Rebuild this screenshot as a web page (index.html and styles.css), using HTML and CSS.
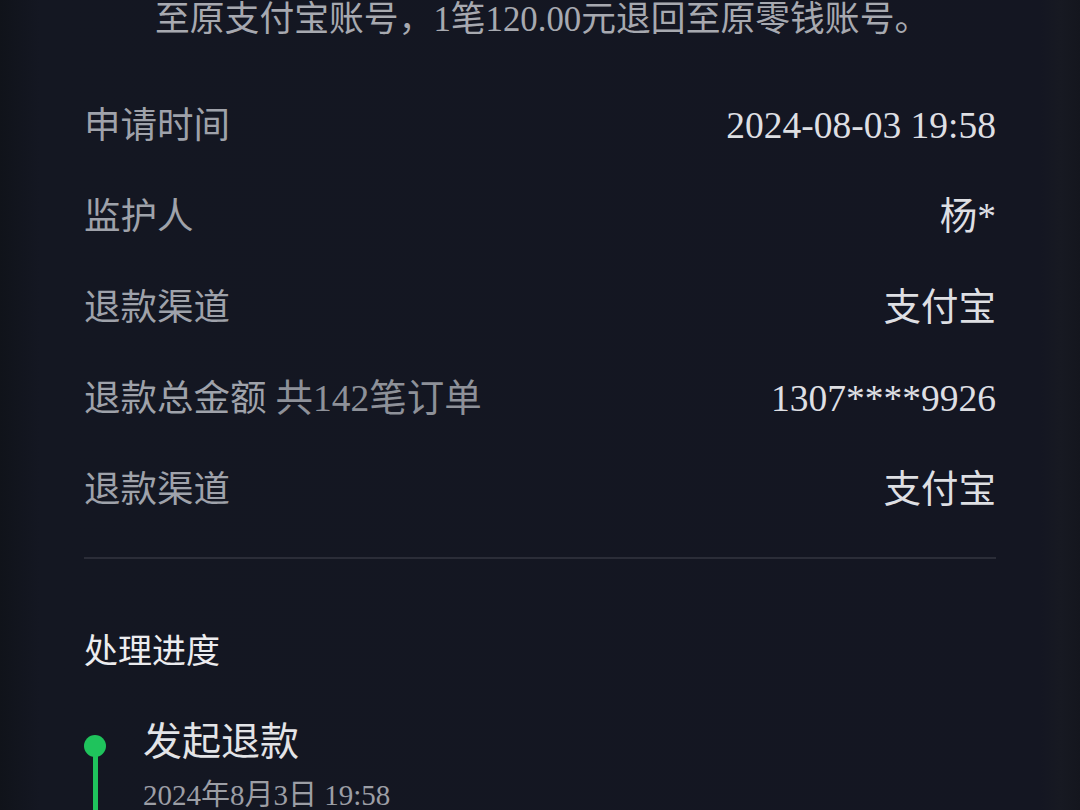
FILE: index.html
```html
<!DOCTYPE html>
<html lang="zh-CN">
<head>
<meta charset="utf-8">
<title>退款详情</title>
<link rel="stylesheet" href="styles.css">
</head>
<body>
<div class="screen">
  <div class="card">
    <p class="notice">至原支付宝账号，1笔120.00元退回至原零钱账号。</p>
    <div class="rows">
      <div class="row"><span class="label">申请时间</span><span class="value">2024-08-03 19:58</span></div>
      <div class="row"><span class="label">监护人</span><span class="value">杨*</span></div>
      <div class="row"><span class="label">退款渠道</span><span class="value">支付宝</span></div>
      <div class="row"><span class="label">退款总金额<span class="sub">共142笔订单</span></span><span class="value">1307****9926</span></div>
      <div class="row"><span class="label">退款渠道</span><span class="value">支付宝</span></div>
    </div>
    <div class="divider"></div>
    <h2 class="section-title">处理进度</h2>
    <div class="timeline">
      <div class="step">
        <div class="rail"><span class="dot"></span><span class="line"></span></div>
        <div class="step-body">
          <div class="step-title">发起退款</div>
          <div class="step-time">2024年8月3日 19:58</div>
        </div>
      </div>
    </div>
  </div>
</div>
</body>
</html>
```

FILE: styles.css
```css
html, body {
  margin: 0;
  padding: 0;
  height: 100%;
  background: #131520;
  overflow: hidden;
}
body {
  font-family: "Liberation Serif", "Noto Sans CJK SC", sans-serif;
}
.screen {
  height: 810px;
  overflow: hidden;
  display: flex;
  background: linear-gradient(90deg, #10131a 0, #141722 40px, #141622 1040px, #171922 1060px, #14161e 1080px);
}
.card {
  flex: 1;
  padding: 0 84px;
  display: flex;
  flex-direction: column;
}
.card > * {
  flex-shrink: 0;
}
.notice {
  margin: 0;
  padding-left: 71px;
  font-size: 34.8px;
  line-height: 40px;
  color: #a7a9b0;
  white-space: nowrap;
}
.rows {
  margin-top: 40px;
  display: flex;
  flex-direction: column;
}
.row {
  flex-shrink: 0;
  height: 91px;
  display: flex;
  align-items: center;
  justify-content: space-between;
  font-size: 36.5px;
  line-height: 44px;
}
.label {
  color: #9fa2aa;
}
.sub {
  margin-left: 9px;
  font-size: 37.5px;
  color: #8e9199;
}
.value {
  font-size: 37.5px;
  color: #dedfe3;
}
.divider {
  margin-top: 22px;
  height: 2px;
  background: #2b2d38;
}
.section-title {
  margin: 68px 0 0;
  font-size: 34px;
  line-height: 50px;
  font-weight: normal;
  color: #ececef;
}
.timeline {
  margin-top: 41px;
}
.step {
  display: flex;
  gap: 37px;
}
.rail {
  width: 22px;
  display: flex;
  flex-direction: column;
  align-items: center;
  padding-top: 17px;
}
.dot {
  width: 22px;
  height: 22px;
  border-radius: 50%;
  background: #1fc35c;
  flex: none;
}
.line {
  width: 5px;
  flex: 1;
  min-height: 80px;
  margin-top: -2px;
  background: #1fc35c;
}
.step-body {
  display: flex;
  flex-direction: column;
}
.step-title {
  font-size: 39px;
  line-height: 48px;
  color: #e3e4e7;
}
.step-time {
  margin-top: 12px;
  font-size: 29px;
  line-height: 34px;
  color: #9c9ea5;
}
```
